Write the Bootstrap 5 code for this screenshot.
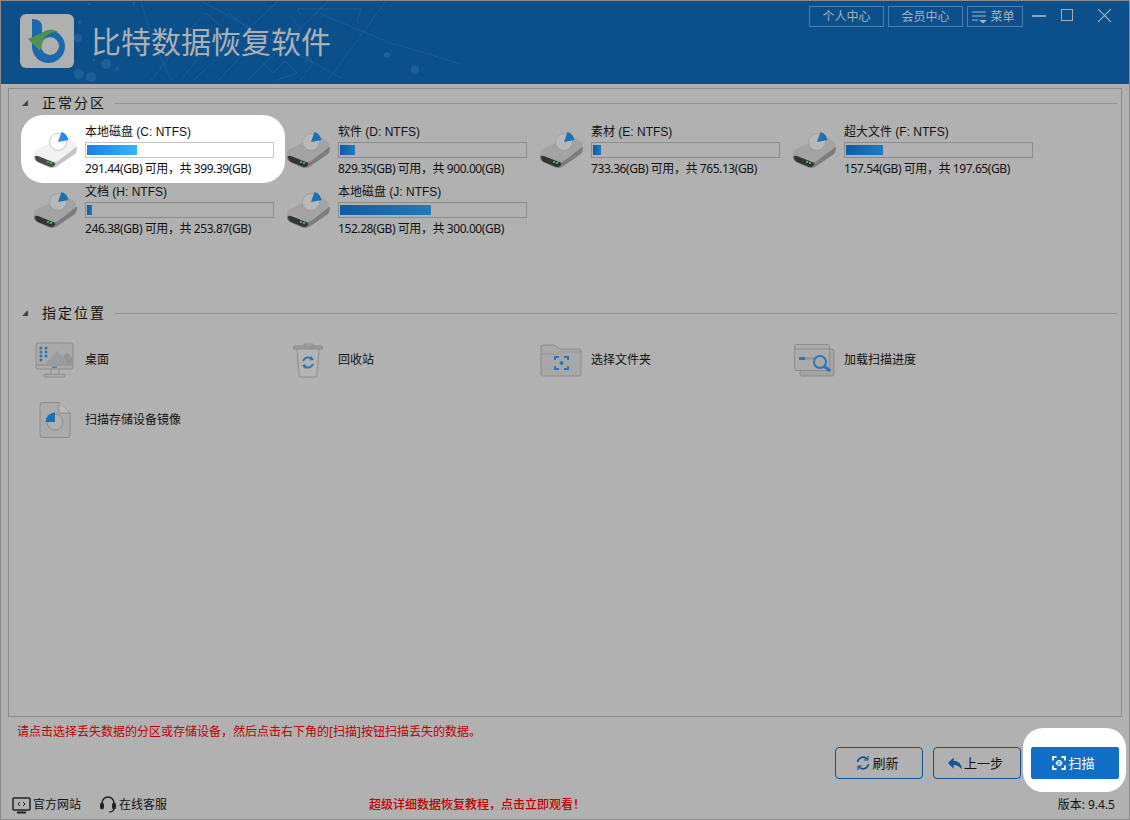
<!DOCTYPE html>
<html lang="zh-CN">
<head>
    <meta charset="UTF-8">
    <meta name="viewport" content="width=device-width, initial-scale=1.0">
    <title>比特数据恢复软件</title>
    <link href="https://cdn.jsdelivr.net/npm/bootstrap@5.3.0/dist/css/bootstrap.min.css" rel="stylesheet">
    <style>
        html, body { height: 100%; }
        body {
            font-family: "Noto Sans", "Noto Sans CJK SC", sans-serif;
            font-size: 12px;
            line-height: 16px;
            background-color: #b1b1b1;
            color: #111;
            overflow: hidden;
        }
        .app { height: 820px; border: 1px solid #8a8a8a; }
        .app-header {
            height: 83px;
            background-color: #0b4f8b;
            flex: none;
            overflow: hidden;
        }
        .header-art { position: absolute; left: 0; top: 0; }
        .logo {
            width: 54px; height: 54px;
            margin: 13px 17px 0 19px;
            background-color: #b0b0b0;
            border-radius: 6px;
            flex: none;
            z-index: 1;
        }
        .app-title {
            font-size: 30px;
            line-height: 36px;
            margin-top: 23px;
            font-weight: 400;
            color: #adb0b3;
            z-index: 1;
        }
        .top-actions { padding: 5px 0 0; gap: 4px; position: absolute; left: 808px; top: 0; }
        .top-btn {
            height: 21px;
            width: 75px;
            border: 1px solid #4a80b2;
            color: #a9b3bd;
            line-height: 18px;
            gap: 3px;
        }
        .top-btn.menu { width: 56px; padding-right: 3px; }
        .win-icon { position: absolute; top: 8px; }
        .panel {
            margin: 4px 7px 0;
            height: 629px;
            flex: none;
            border: 1px solid #8e8e8e;
            padding: 3px 4px 0 13px;
        }
        .section-head { height: 22px; font-size: 14px; letter-spacing: 2px; }
        .section-head .tri {
            width: 0; height: 0;
            border-left: 6px solid transparent;
            border-bottom: 6px solid #444;
            margin-right: 14px;
        }
        .section-head .rule { height: 1px; background-color: #8f8f8f; margin-left: 9px; }
        .section-drives { height: 210px; }
        .tile-grid { display: grid; grid-template-columns: repeat(4, 253px); margin-top: 1px; }
        .tile-grid.places { margin-top: 6px; }
        .tile { height: 60px; }
        .tile-icon { width: 63px; flex: none; }
        .drive-tile .tile-icon { padding: 15px 0 0 10px; }
        .drive-body { padding-top: 9px; width: 189px; z-index: 1; }
        .drive-name { font-family: "Liberation Sans", "Noto Sans CJK SC", sans-serif; }
        .drive-free { letter-spacing: -.42px; }
        .drive-tile svg { z-index: 1; position: relative; }
        .usage-bar {
            height: 16px;
            border: 1px solid #8c8c8c;
            padding: 2px 1px 2px 1px;
            margin: 2px 0 3px;
        }
        .usage-fill { height: 100%; background: linear-gradient(90deg, #125aa5, #1f7dbd); }
        .drive-tile { --body: #a3a3a3; --side: #7d7d7d; --dial: #b8b8b8; --wedge: #1c70b4; --slot: #333; }
        .drive-tile.selected { --body: #f2f2f2; --side: #c4c4c4; --dial: #fff; --wedge: #2a86e8; --slot: #4a4a4a; }
        .drive-tile.selected::before {
            content: "";
            position: absolute;
            left: -1px; top: 0;
            width: 264px; height: 68px;
            background-color: #fff;
            border-radius: 22px;
        }
        .drive-tile.selected .usage-bar { background-color: #fff; border-color: #c6c6c6; }
        .drive-tile.selected .usage-fill { background: linear-gradient(90deg, #1b7de6, #37b6f9); }
        .place-tile { align-items: center; }
        .place-tile .tile-icon { display: flex; justify-content: center; padding-left: 3px; }
        .msg { color: #c00000; padding: 7px 0 0 16px; height: 30px; }
        .actions { gap: 10px; padding-right: 10px; flex: none; }
        .btn-app {
            width: 88px; height: 32px;
            font-size: 13px;
            line-height: 16px;
            padding: 0 3px 0 0;
            gap: 2px;
            color: #111;
            border: 1px solid #0e5596;
            border-radius: 4px;
        }
        .btn-scan { background-color: #1170c6; border-color: #1170c6; color: #fff; border-radius: 2px; }
        .btn-scan:hover { background-color: #1170c6; color: #fff; }
        .scan-wrap::before {
            content: "";
            position: absolute;
            left: -8px; top: -19px;
            width: 103px; height: 64px;
            background-color: #fff;
            border-radius: 20px;
        }
        .app-footer { padding: 17px 14px 0 11px; }
        .footer-link { gap: 2px; color: #111; }
        .footer-link.site { margin-right: 18px; }
        .promo { color: #c00000; font-weight: 500; margin-left: 202px; }
    </style>
</head>
<body>
    <svg width="0" height="0" class="position-absolute">
        <symbol id="drive" viewBox="0 0 46 40">
            <path d="M2 25 Q1 30 5 32 L16 37 Q20 39 24 37 L43 24 Q45 22 45 17 L2 22Z" fill="var(--side)"/>
            <path d="M2 24 Q1 21 5 19 L28 8 Q32 6 37 8 L42 11 Q46 14 43 18 L26 31 Q21 34 16 32 L5 28 Q2 27 2 24Z" fill="var(--body)"/>
            <path d="M3 27 Q3 25 6 26 L21 32 Q24 33 23 35 L22 36 Q20 38 16 36 L6 32 Q3 30 3 27Z" fill="var(--slot)"/>
            <rect x="15" y="31" width="2" height="2" fill="#35c24a"/>
            <rect x="18" y="32" width="2" height="2" fill="#35c24a"/>
            <circle cx="26" cy="12" r="8.500" fill="var(--dial)" stroke="#8f8f8f" stroke-width=".5"/>
            <path d="M26 12 L29.500 2 Q35 3.500 36.500 10 Z" fill="var(--wedge)"/>
        </symbol>
    </svg>

    <div class="app d-flex flex-column position-relative">
        <header class="app-header d-flex position-relative">
            <svg class="header-art" width="1130" height="83" fill="none">
                <g stroke="#25609a" stroke-width=".8">
                    <path d="M140 0 L152 40 L170 79"/>
                    <path d="M193 79 L277 0"/>
                    <path d="M247 79 L327 0"/>
                    <path d="M327 79 L385 0"/>
                    <path d="M320 13 L390 42 L460 63"/>
                    <path d="M200 0 L270 38 L340 77"/>
                    <path d="M150 79 L190 28 L205 12 L220 25"/>
                    <path d="M180 79 L215 35 L240 55 L218 79"/>
                    <path d="M260 60 L272 72 L284 60 L296 72 L276 79"/>
                    <path d="M300 14 L296 8 L360 8 L356 20"/>
                    <path d="M228 12 L250 30 L300 30 L290 14"/>
                    <path d="M300 79 L312 62 L308 56 L304 62"/>
                </g>
                <g fill="#2d699f" opacity=".6">
                    <circle cx="105" cy="63" r="5"/><circle cx="78" cy="73" r="5"/><circle cx="90" cy="76" r="5"/>
                    <circle cx="77" cy="37" r="4"/><circle cx="79" cy="21" r="2"/><circle cx="88" cy="3" r="1.500"/>
                    <circle cx="133" cy="2" r="1.500"/><circle cx="386" cy="54" r="3"/><circle cx="414" cy="69" r="4"/>
                    <circle cx="116" cy="68" r="2"/><circle cx="93" cy="59" r="1.500"/>
                </g>
            </svg>
            <div class="logo position-relative">
                <svg width="54" height="54" viewBox="0 0 54 54">
                    <path d="M12 5 Q22 5 22 13 L22 19 Q26 16 30 16 A16.500 16.500 0 1 1 12 32Z" fill="#1b68ae"/>
                    <circle cx="30" cy="32" r="9" fill="#b0b0b0"/>
                    <path d="M8 25 L24 18 Q32 13 38 18 Q30 17 24 24 L20 37 Z" fill="#4f9150"/>
                </svg>
            </div>
            <div class="app-title">比特数据恢复软件</div>
            <div class="top-actions d-flex">
                <div class="top-btn d-flex align-items-center justify-content-center">个人中心</div>
                <div class="top-btn d-flex align-items-center justify-content-center">会员中心</div>
                <div class="top-btn menu d-flex align-items-center justify-content-center">
                    <svg width="15" height="14" viewBox="0 0 15 14" fill="none" stroke="#a9b3bd"><path d="M0 2H14M0 6H14M0 10H6"/><path d="M7 10H15L11 13.500Z" fill="#a9b3bd" stroke="none"/></svg>
                    菜单
                </div>
            </div>
            <svg class="win-icon" style="left:1031px" width="14" height="14" stroke="#8fa3b8" stroke-width="2"><path d="M0 7H14"/></svg>
            <svg class="win-icon" style="left:1060px" width="13" height="13" fill="none" stroke="#a9aeb3" stroke-width="1"><rect x=".5" y=".5" width="11" height="11"/></svg>
            <svg class="win-icon" style="left:1097px" width="13" height="13" stroke="#a9b3bd" stroke-width="1.100"><path d="M0 0L13 13M13 0L0 13"/></svg>
        </header>

        <main class="panel">
            <section class="section-drives">
                <div class="section-head d-flex align-items-center">
                    <span class="tri"></span><span>正常分区</span><span class="rule flex-grow-1"></span>
                </div>
                <div class="tile-grid">
                    <div class="tile drive-tile selected d-flex position-relative">
                        <div class="tile-icon"><svg width="46" height="40"><use href="#drive"/></svg></div>
                        <div class="drive-body position-relative">
                            <div class="drive-name">本地磁盘 (C: NTFS)</div>
                            <div class="usage-bar"><div class="usage-fill" style="width:27%"></div></div>
                            <div class="drive-free">291.44(GB) 可用，共 399.39(GB)</div>
                        </div>
                    </div>
                    <div class="tile drive-tile d-flex position-relative">
                        <div class="tile-icon"><svg width="46" height="40"><use href="#drive"/></svg></div>
                        <div class="drive-body">
                            <div class="drive-name">软件 (D: NTFS)</div>
                            <div class="usage-bar"><div class="usage-fill" style="width:7.9%"></div></div>
                            <div class="drive-free">829.35(GB) 可用，共 900.00(GB)</div>
                        </div>
                    </div>
                    <div class="tile drive-tile d-flex position-relative">
                        <div class="tile-icon"><svg width="46" height="40"><use href="#drive"/></svg></div>
                        <div class="drive-body">
                            <div class="drive-name">素材 (E: NTFS)</div>
                            <div class="usage-bar"><div class="usage-fill" style="width:4.2%"></div></div>
                            <div class="drive-free">733.36(GB) 可用，共 765.13(GB)</div>
                        </div>
                    </div>
                    <div class="tile drive-tile d-flex position-relative">
                        <div class="tile-icon"><svg width="46" height="40"><use href="#drive"/></svg></div>
                        <div class="drive-body">
                            <div class="drive-name">超大文件 (F: NTFS)</div>
                            <div class="usage-bar"><div class="usage-fill" style="width:20.200%"></div></div>
                            <div class="drive-free">157.54(GB) 可用，共 197.65(GB)</div>
                        </div>
                    </div>
                    <div class="tile drive-tile d-flex position-relative">
                        <div class="tile-icon"><svg width="46" height="40"><use href="#drive"/></svg></div>
                        <div class="drive-body">
                            <div class="drive-name">文档 (H: NTFS)</div>
                            <div class="usage-bar"><div class="usage-fill" style="width:2.9%"></div></div>
                            <div class="drive-free">246.38(GB) 可用，共 253.87(GB)</div>
                        </div>
                    </div>
                    <div class="tile drive-tile d-flex position-relative">
                        <div class="tile-icon"><svg width="46" height="40"><use href="#drive"/></svg></div>
                        <div class="drive-body">
                            <div class="drive-name">本地磁盘 (J: NTFS)</div>
                            <div class="usage-bar"><div class="usage-fill" style="width:49.200%"></div></div>
                            <div class="drive-free">152.28(GB) 可用，共 300.00(GB)</div>
                        </div>
                    </div>
                </div>
            </section>

            <section>
                <div class="section-head d-flex align-items-center">
                    <span class="tri"></span><span>指定位置</span><span class="rule flex-grow-1"></span>
                </div>
                <div class="tile-grid places">
                    <div class="tile place-tile d-flex">
                        <div class="tile-icon">
                            <svg width="40" height="36" viewBox="0 0 40 36" fill="none">
                                <rect x="1" y="1" width="37" height="26" rx="2" fill="#aaa" stroke="#8c8c8c"/>
                                <path d="M1 23H38" stroke="#8c8c8c"/>
                                <path d="M10 22 L22 9 L34 22Z" fill="#9c9c9c"/>
                                <path d="M28 14 L32 10 L37 16 L37 22 L33 22Z" fill="#959595"/>
                                <g fill="#2c76b5"><circle cx="6" cy="6" r="1.500"/><circle cx="11" cy="6" r="1.500"/><circle cx="6" cy="10" r="1.500"/><circle cx="11" cy="10" r="1.500"/><circle cx="6" cy="14" r="1.500"/><circle cx="11" cy="14" r="1.500"/><circle cx="6" cy="18" r="1.500"/></g>
                                <rect x="17" y="24.500" width="5" height="1.200" fill="#2c76b5"/>
                                <path d="M16 27V32M24 27V32" stroke="#8c8c8c"/>
                                <rect x="9" y="32" width="21" height="3" rx="1" fill="#aaa" stroke="#8c8c8c"/>
                            </svg>
                        </div>
                        <div>桌面</div>
                    </div>
                    <div class="tile place-tile d-flex">
                        <div class="tile-icon">
                            <svg width="31" height="35" viewBox="0 0 31 35" fill="none">
                                <path d="M11 3V1H20V3" stroke="#8c8c8c"/>
                                <rect x=".5" y="3" width="29" height="3" rx="1" fill="#9a9a9a" stroke="#8c8c8c"/>
                                <path d="M4 6 L6 32 Q6 34 8 34 H22 Q24 34 24 32 L26 6Z" fill="#b4b4b4" stroke="#8c8c8c"/>
                                <path d="M10 18 A5.500 5.500 0 0 1 19 16 M20 21 A5.500 5.500 0 0 1 11 23" stroke="#2c76b5" stroke-width="2"/>
                                <path d="M18 13 L21 17 L16.500 17.500Z M12 26 L9 22 L13.500 21.500Z" fill="#2c76b5"/>
                            </svg>
                        </div>
                        <div>回收站</div>
                    </div>
                    <div class="tile place-tile d-flex">
                        <div class="tile-icon">
                            <svg width="42" height="33" viewBox="0 0 42 33" fill="none">
                                <path d="M1 3 Q1 1 3 1 H14 L20 5 H39 Q41 5 41 7 V30 Q41 32 39 32 H3 Q1 32 1 30Z" fill="#a8a8a8" stroke="#8c8c8c"/>
                                <path d="M1 10 H18 L20 8 H41" stroke="#979797"/>
                                <path d="M15 16V13H19M24 13H28V16M28 22V25H24M19 25H15V22" stroke="#2c76b5" stroke-width="2"/>
                                <circle cx="21.500" cy="19" r="2" fill="#2c76b5"/>
                            </svg>
                        </div>
                        <div>选择文件夹</div>
                    </div>
                    <div class="tile place-tile d-flex">
                        <div class="tile-icon">
                            <svg width="41" height="33" viewBox="0 0 41 33" fill="none">
                                <rect x="6" y="5" width="34" height="27" rx="2" fill="#a4a4a4" stroke="#8c8c8c"/>
                                <rect x=".5" y=".5" width="35" height="26" rx="2" fill="#ababab" stroke="#8c8c8c"/>
                                <path d="M1 5H35" stroke="#8c8c8c"/>
                                <rect x="5" y="13" width="6" height="3" fill="#2c76b5"/>
                                <rect x="11" y="13" width="9" height="3" fill="#979797"/>
                                <circle cx="26" cy="18" r="6" fill="#aaa" stroke="#2c76b5" stroke-width="2"/>
                                <path d="M30 22L36 27" stroke="#2c76b5" stroke-width="3"/>
                            </svg>
                        </div>
                        <div>加载扫描进度</div>
                    </div>
                    <div class="tile place-tile d-flex">
                        <div class="tile-icon">
                            <svg width="32" height="36" viewBox="0 0 32 36" fill="none">
                                <path d="M3 .5 H20 L31 11 V33 Q31 35.500 29 35.500 H3 Q1 35.500 1 33 V3 Q1 .5 3 .5Z" fill="#ababab" stroke="#8c8c8c"/>
                                <path d="M20 .5 V11 H31" fill="#bbb" stroke="#8c8c8c"/>
                                <circle cx="16" cy="20" r="8" fill="#b0b0b0" stroke="#8f8f8f"/>
                                <path d="M16 20 H6.500 A9.500 9.500 0 0 1 16 10.500Z" fill="#1c70b4"/>
                            </svg>
                        </div>
                        <div>扫描存储设备镜像</div>
                    </div>
                </div>
            </section>
        </main>

        <div class="msg">请点击选择丢失数据的分区或存储设备，然后点击右下角的[扫描]按钮扫描丢失的数据。</div>

        <div class="actions d-flex justify-content-end">
            <button class="btn btn-app d-flex align-items-center justify-content-center">
                <svg width="14" height="14" viewBox="0 0 14 14" fill="none" stroke="#0e5596" stroke-width="1.600"><path d="M1.500 6 A5.500 5.500 0 0 1 11 3 M12.500 8 A5.500 5.500 0 0 1 3 11"/><path d="M12 0V4H8M2 14V10H6" stroke-width="1.200"/></svg>
                刷新
            </button>
            <button class="btn btn-app d-flex align-items-center justify-content-center">
                <svg width="14" height="13" viewBox="0 0 15 13"><path d="M6 0V3.500 Q14 4 15 13 Q12 8 6 8V12L0 6Z" fill="#0e5596"/></svg>
                上一步
            </button>
            <div class="scan-wrap position-relative">
                <button class="btn btn-app btn-scan d-flex align-items-center justify-content-center position-relative">
                    <svg width="14" height="14" viewBox="0 0 14 14" fill="none" stroke="#fff" stroke-width="1.800"><path d="M1 4.500V1H4.500M9.500 1H13V4.500M13 9.500V13H9.500M4.500 13H1V9.500"/><circle cx="7" cy="7" r="2.300" stroke-width="1.200"/><path d="M3.500 7H10.500" stroke-width="1"/></svg>
                    扫描
                </button>
            </div>
        </div>

        <footer class="app-footer d-flex align-items-center">
            <a class="footer-link site d-flex align-items-center text-decoration-none">
                <svg width="19" height="17" viewBox="0 0 19 17" fill="none"><rect x="1" y="1" width="17" height="12" rx="1" stroke="#222" stroke-width="1.500"/><path d="M5 15.500H14" stroke="#222" stroke-width="2"/><path d="M8 5L6 7L8 9M11 5L13 7L11 9" stroke="#222"/></svg>
                官方网站
            </a>
            <a class="footer-link d-flex align-items-center text-decoration-none">
                <svg width="18" height="18" viewBox="0 0 18 18" fill="none" stroke="#222"><path d="M3 9V7A6 6 0 0 1 15 7V9" stroke-width="1.500"/><rect x="1.500" y="7" width="3" height="6" rx="1.500" fill="#222"/><rect x="13.500" y="7" width="3" height="6" rx="1.500" fill="#222"/><path d="M15 13Q14 16 10 16" stroke-width="1.200"/></svg>
                在线客服
            </a>
            <a class="promo text-decoration-none">超级详细数据恢复教程，点击立即观看！</a>
            <div class="ms-auto">版本: 9.4.5</div>
        </footer>
    </div>
    <script src="https://cdn.jsdelivr.net/npm/bootstrap@5.3.0/dist/js/bootstrap.bundle.min.js"></script>
</body>
</html>
